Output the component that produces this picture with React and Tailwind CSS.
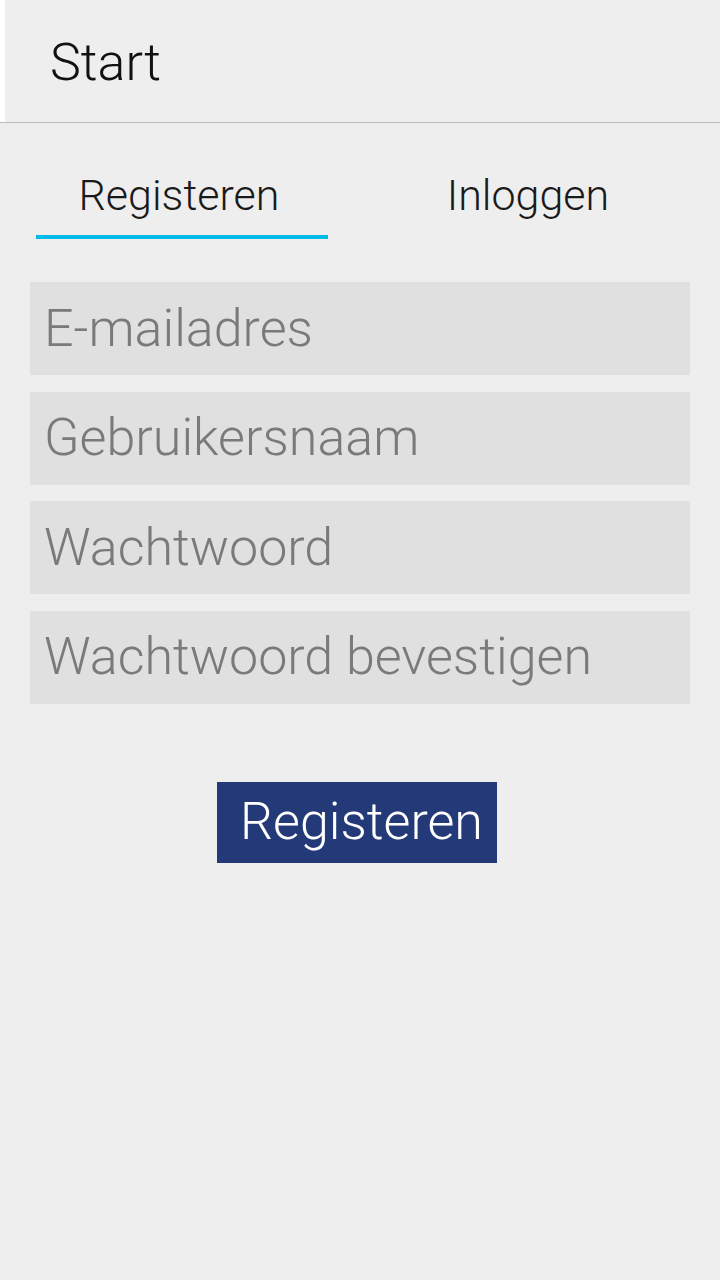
import React from 'react';

const fields = ['E-mailadres', 'Gebruikersnaam', 'Wachtwoord', 'Wachtwoord bevestigen'];

const App = () => {
  return (
    <div className="min-h-[1280px] w-[720px] bg-[#eeeeee] font-['Roboto',sans-serif] font-light">
      {/* header */}
      <div className="border-b border-[#bdbdbd]">
        <div className="h-[122px] border-l-[5px] border-white pl-[45px] pt-[37px]">
          <h1 className="text-[52px] leading-none text-[#111111] font-light">Start</h1>
        </div>
      </div>

      {/* tabs */}
      <div className="flex pt-[51px]">
        <div className="ml-[36px] w-[292px] flex flex-col items-center">
          <span className="text-[43px] leading-none text-[#1a1a1a] pr-[6px]">Registeren</span>
          <div className="mt-[18px] h-[4px] w-full bg-[#00bbe8]" />
        </div>
        <div className="ml-[54px] w-[292px] flex flex-col items-center">
          <span className="text-[43px] leading-none text-[#1a1a1a]">Inloggen</span>
        </div>
      </div>

      {/* form */}
      <div className="mt-[43px] mx-[30px] flex flex-col gap-[16.5px]">
        {fields.map((f) => (
          <div key={f} className="h-[93px] bg-[#e0e0e0] flex items-center pl-[14px]">
            <span className="text-[52px] leading-none text-[#7a7a7a]">{f}</span>
          </div>
        ))}
      </div>

      <div className="mt-[78px] flex justify-center">
        <button className="ml-[-6px] w-[280px] h-[81px] bg-[#243a78] flex items-center pl-[23px]">
          <span className="text-[52px] leading-none text-white font-light">Registeren</span>
        </button>
      </div>
    </div>
  );
};

export default App;
